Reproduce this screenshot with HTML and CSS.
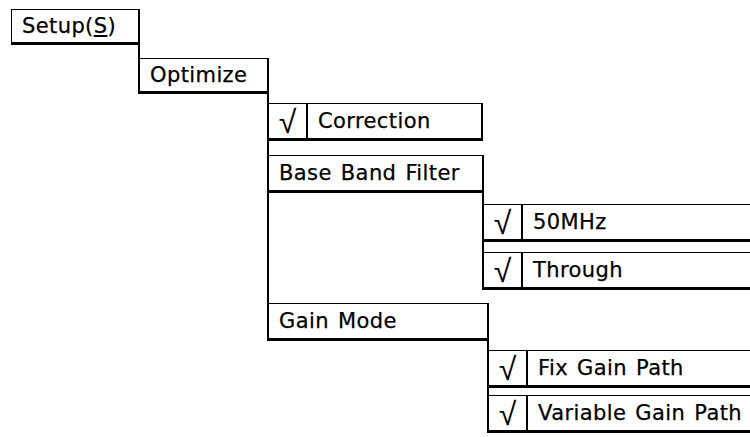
FILE: index.html
```html
<!DOCTYPE html>
<html lang="en">
<head>
    <meta charset="UTF-8">
    <title>Setup menu</title>
    <link rel="stylesheet" href="styles.css">
</head>
<body>
    <div class="tree">
        <div class="node">
            <div class="item root short w-setup"><span class="label">Setup(<u>S</u>)</span></div>
            <div class="sub">
                <div class="node gap-13">
                    <div class="item short w-opt"><span class="label">Optimize</span></div>
                    <div class="sub">
                        <div class="node gap-9">
                            <div class="item w-corr"><span class="check">√</span><span class="label">Correction</span></div>
                        </div>
                        <div class="node gap-14">
                            <div class="item w-band"><span class="label">Base Band Filter</span></div>
                            <div class="sub">
                                <div class="node gap-11">
                                    <div class="item wide"><span class="check">√</span><span class="label">50MHz</span></div>
                                </div>
                                <div class="node gap-10">
                                    <div class="item wide"><span class="check">√</span><span class="label">Through</span></div>
                                </div>
                            </div>
                        </div>
                        <div class="node gap-13">
                            <div class="item w-gain"><span class="label">Gain Mode</span></div>
                            <div class="sub">
                                <div class="node gap-9">
                                    <div class="item wide"><span class="check">√</span><span class="label">Fix Gain Path</span></div>
                                </div>
                                <div class="node gap-7">
                                    <div class="item wide"><span class="check">√</span><span class="label">Variable Gain Path</span></div>
                                </div>
                            </div>
                        </div>
                    </div>
                </div>
            </div>
        </div>
    </div>
</body>
</html>
```

FILE: styles.css
```css
*{
    margin: 0;
    padding: 0;
    box-sizing: border-box;
}
html, body{
    background: #fff;
    overflow: hidden;
}
body{
    width: 750px;
    height: 437px;
    font-family: "DejaVu Sans", "Noto Sans CJK JP", sans-serif;
    font-size: 21px;
    letter-spacing: 0.4px;
    word-spacing: 2px;
    color: #000;
    -webkit-text-stroke: 0.25px #000;
}
.tree{
    width: 750px;
    overflow: hidden;
    padding: 9px 0 0 11px;
}
/* node: gap line above, its box, then its submenu hanging off the box's bottom right */
.node{
    display: grid;
    grid-template-columns: max-content 1fr;
}
.node > .item{
    grid-row: 2;
    grid-column: 1;
}
.node > .sub{
    grid-row: 3;
    grid-column: 2;
}
.sub{
    display: flex;
    flex-direction: column;
    margin-left: -2px;
}
/* the parent's column line runs down to the last sibling's box */
.sub > .node::before{
    content: "";
    grid-row: 1;
    grid-column: 1;
    border-left: 2px solid #000;
}
.sub > .node:not(:last-child)::after{
    content: "";
    grid-row: 3;
    grid-column: 1;
    border-left: 2px solid #000;
}
.item{
    display: flex;
    align-items: center;
    height: 38px;
    border-top: 1px solid #000;
    border-left: 2px solid #000;
    border-right: 2px solid #000;
    border-bottom: 3px solid #000;
    background: #fff;
    white-space: nowrap;
}
.item.short{
    height: 36px;
}
.item.root{
    border-left: 1px solid #000;
}
.label{
    padding-left: 10px;
}
.check{
    display: flex;
    align-items: center;
    justify-content: center;
    flex: none;
    width: 39px;
    height: 100%;
    padding-top: 3px;
    border-right: 2px solid #000;
    font-family: "Liberation Sans", sans-serif;
    font-size: 32px;
    letter-spacing: 0;
    -webkit-text-stroke: 0;
}
.check + .label{
    padding-left: 10px;
}

.w-setup{ width: 129px; }
.w-opt{ width: 131px; }
.w-corr{ width: 216px; }
.w-band{ width: 217px; }
.w-gain{ width: 222px; }
.wide{ width: 300px; }

.gap-7::before{ height: 7px; }
.gap-9::before{ height: 9px; }
.gap-10::before{ height: 10px; }
.gap-11::before{ height: 11px; }
.gap-13::before{ height: 13px; }
.gap-14::before{ height: 14px; }
```
